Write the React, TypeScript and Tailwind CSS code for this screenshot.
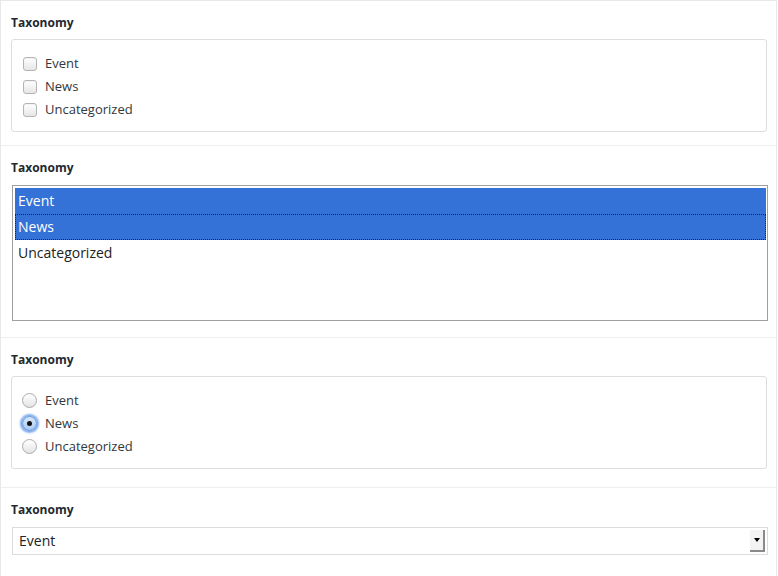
import React from 'react';

const options = ['Event', 'News', 'Uncategorized'];

const Label: React.FC = () => (
  <div className="h-5 text-[12px] leading-5 font-bold text-[#23282d]">Taxonomy</div>
);

const Checkbox: React.FC = () => (
  <span className="block w-[14px] h-[14px] rounded-[3px] border border-[#b4b4b4] bg-gradient-to-b from-white to-[#e6e6e6] shadow-[inset_0_1px_1px_rgba(0,0,0,0.05)]" />
);

const Radio: React.FC<{ checked?: boolean }> = ({ checked }) =>
  checked ? (
    <span className="flex items-center justify-center w-[15px] h-[15px] rounded-full border border-[#5b8fd8] bg-gradient-to-b from-[#d9e8fb] to-[#a9c9f3] shadow-[0_0_2px_2px_rgba(80,140,235,0.75)]">
      <span className="w-[5px] h-[5px] rounded-full bg-[#111]" />
    </span>
  ) : (
    <span className="block w-[15px] h-[15px] rounded-full border border-[#ababab] bg-gradient-to-b from-white to-[#e4e4e4]" />
  );

export default function App() {
  return (
    <div
      className="w-[777px] h-[576px] border-x border-t border-[#e8e8e8] bg-white text-[#32373c]"
      style={{ fontFamily: '"Open Sans", "Liberation Sans", sans-serif' }}
    >
      {/* checkboxes */}
      <section className="pl-[10px] pr-[9px] pt-3 pb-[13px] border-b border-[#eeeeee]">
        <Label />
        <div className="mt-[6px] border border-[#dddddd] rounded-[3px] pt-3 pb-[10px] pl-[11px]">
          {options.map((o) => (
            <div key={o} className="flex items-center h-[23px] gap-[8px] text-[13px]">
              <Checkbox />
              <span>{o}</span>
            </div>
          ))}
        </div>
      </section>

      {/* multi select */}
      <section className="pl-[10px] pr-[9px] pt-3 pb-[16px] border-b border-[#eeeeee]">
        <Label />
        <div className="mt-[7px] ml-px w-[756px] h-[136px] border border-[#a0a0a0] pt-[2px] pl-[2px] pr-px text-[14px]">
          <div className="h-[26px] flex items-center px-[3px] pb-[2px] bg-[#3572d8] text-white">Event</div>
          <div className="h-[26px] flex items-center px-[2px] pb-[2px] bg-[#3572d8] text-white border border-dotted border-[#0a1a7a]">
            News
          </div>
          <div className="h-[26px] flex items-center px-[3px] pb-[2px] text-[#222]">Uncategorized</div>
        </div>
      </section>

      {/* radios */}
      <section className="pl-[10px] pr-[9px] pt-3 pb-[18px] border-b border-[#eeeeee]">
        <Label />
        <div className="mt-[6px] border border-[#dddddd] rounded-[3px] pt-3 pb-[10px] pl-[10px]">
          {options.map((o) => (
            <div key={o} className="flex items-center h-[23px] gap-[8px] text-[13px]">
              <Radio checked={o === 'News'} />
              <span>{o}</span>
            </div>
          ))}
        </div>
      </section>

      {/* single select */}
      <section className="pl-[10px] pr-[9px] pt-3">
        <Label />
        <div className="mt-[7px] ml-px w-[756px] h-[28px] border border-[#dcdcdc] flex items-center pl-[6px] pr-[2px] pb-px text-[14px] text-[#222]">
          <span className="flex-1">Event</span>
          <span className="w-[15px] h-[22px] bg-[#f3f3f3] border-r-2 border-b-2 border-[#8a8a8a] flex items-center justify-center">
            <span className="w-0 h-0 border-l-[3px] border-r-[3px] border-t-[4px] border-l-transparent border-r-transparent border-t-black" />
          </span>
        </div>
      </section>
    </div>
  );
}
